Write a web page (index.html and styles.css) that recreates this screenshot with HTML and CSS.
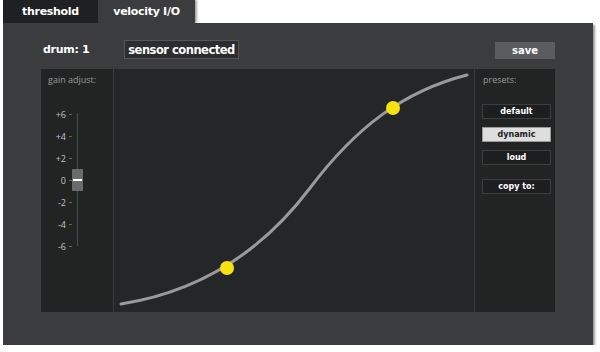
FILE: index.html
```html
<!DOCTYPE html>
<html>
<head>
<meta charset="utf-8">
<link rel="stylesheet" href="styles.css">
</head>
<body>
<div class="app">
  <div class="tabs">
    <div class="tab">threshold</div>
    <div class="tab active">velocity I/O</div>
  </div>
  <div class="panel">
    <div class="header">
      <div class="drum">drum: 1</div>
      <div class="status">sensor connected</div>
      <div class="save">save</div>
    </div>
    <div class="inner">
      <div class="gain">
        <div class="label">gain adjust:</div>
        <div class="scale">
          <div class="marks">
            <div class="mark"><span>+6</span><i></i></div>
            <div class="mark"><span>+4</span><i></i></div>
            <div class="mark"><span>+2</span><i></i></div>
            <div class="mark"><span>0</span><i></i></div>
            <div class="mark"><span>-2</span><i></i></div>
            <div class="mark"><span>-4</span><i></i></div>
            <div class="mark"><span>-6</span><i></i></div>
          </div>
          <div class="track"><div class="thumb"></div></div>
        </div>
      </div>
      <div class="chart">
        <svg width="360" height="243" viewBox="0 0 360 243">
          <path d="M7,235 C90,222 150,180 196,119 S290,22 353,6" fill="none" stroke="#9a9a9a" stroke-width="3" stroke-linecap="round"/>
          <circle cx="113" cy="199" r="7" fill="#f7e210"/>
          <circle cx="279" cy="39" r="7" fill="#f7e210"/>
        </svg>
      </div>
      <div class="presets">
        <div class="label">presets:</div>
        <div class="btns">
          <div class="btn">default</div>
          <div class="btn sel">dynamic</div>
          <div class="btn">loud</div>
          <div class="btn copy">copy to:</div>
        </div>
      </div>
    </div>
  </div>
</div>
</body>
</html>
```
FILE: styles.css
```css
html, body { margin: 0; padding: 0; background: #fff; }
body { font-family: "DejaVu Sans", "Liberation Sans", sans-serif; }
.app { margin-left: 3px; width: 590px; }
.tabs { display: flex; height: 23px; }
.tab {
  width: 95px; height: 23px; background: #1f2021; color: #fff;
  font-weight: bold; font-size: 11px; display: flex; align-items: center; justify-content: center;
  letter-spacing: -0.3px;
}
.tab.active { width: 97px; background: #3b3c3e; box-shadow: 2px 0 2px rgba(0,0,0,0.35); position: relative; z-index: 1; }
.panel {
  width: 514px; height: 305px; background: #3b3c3e; padding: 17px 38px 0 38px;
  box-shadow: 2px 2px 2px rgba(0,0,0,0.4);
  display: flex; flex-direction: column; position: relative; z-index: 2;
}
.header { display: flex; align-items: center; height: 19px; margin-bottom: 10px; }
.drum { color: #fff; font-weight: bold; font-size: 11px; margin-left: 2px; width: 81px; letter-spacing: -0.3px; }
.status {
  height: 17px; width: 113px; border: 1px solid #555658; background: #2c2d2e;
  color: #fff; font-weight: bold; font-size: 11.5px; display: flex; align-items: center; justify-content: center;
  letter-spacing: -0.5px; white-space: nowrap;
}
.save {
  margin-left: auto; width: 60px; height: 17px; background: #5a5c5e; color: #fff;
  font-weight: bold; font-size: 10px; display: flex; align-items: center; justify-content: center; margin-top: 2px;
}
.inner { display: grid; grid-template-columns: 72px 360px 80px; gap: 1px; background: #3a3b3c; height: 243px; }
.gain, .presets { background: #222323; }
.chart { background: #252628; }
.chart svg { display: block; }
.label { font-family: "Open Sans", sans-serif; font-size: 9px; color: #9a9a9a; padding: 4px 0 0 7px; }
.scale { display: flex; margin-top: 17px; margin-left: 8px; }
.marks { display: flex; flex-direction: column; }
.mark { height: 22px; display: flex; align-items: center; justify-content: flex-end; width: 23px; }
.mark span { font-family: "Open Sans", sans-serif; font-size: 9px; color: #c4c4c4; }
.mark i { display: block; width: 3px; height: 1px; background: #666; margin-left: 3px; }
.track { position: relative; width: 1px; background: #4a4b4c; margin: 10px 0 10px 5px; height: 133px; }
.thumb {
  position: absolute; left: -5px; top: 56px; width: 11px; height: 22px; background: #6a6b6c;
}
.thumb::after { content: ""; position: absolute; left: 1px; right: 1px; top: 10px; height: 2px; background: #fff; }
.presets .label { padding-left: 8px; }
.btns { display: flex; flex-direction: column; gap: 8px; margin: 18px 0 0 7px; }
.btn {
  width: 67px; height: 13px; border: 1px solid #3c3d3e; background: #1d1e1f; color: #fff;
  font-weight: bold; font-size: 8px; display: flex; align-items: center; justify-content: center;
}
.btn.sel { background: #dedede; color: #222; border-color: #999; }
.btn.copy { margin-top: 6px; }
```
